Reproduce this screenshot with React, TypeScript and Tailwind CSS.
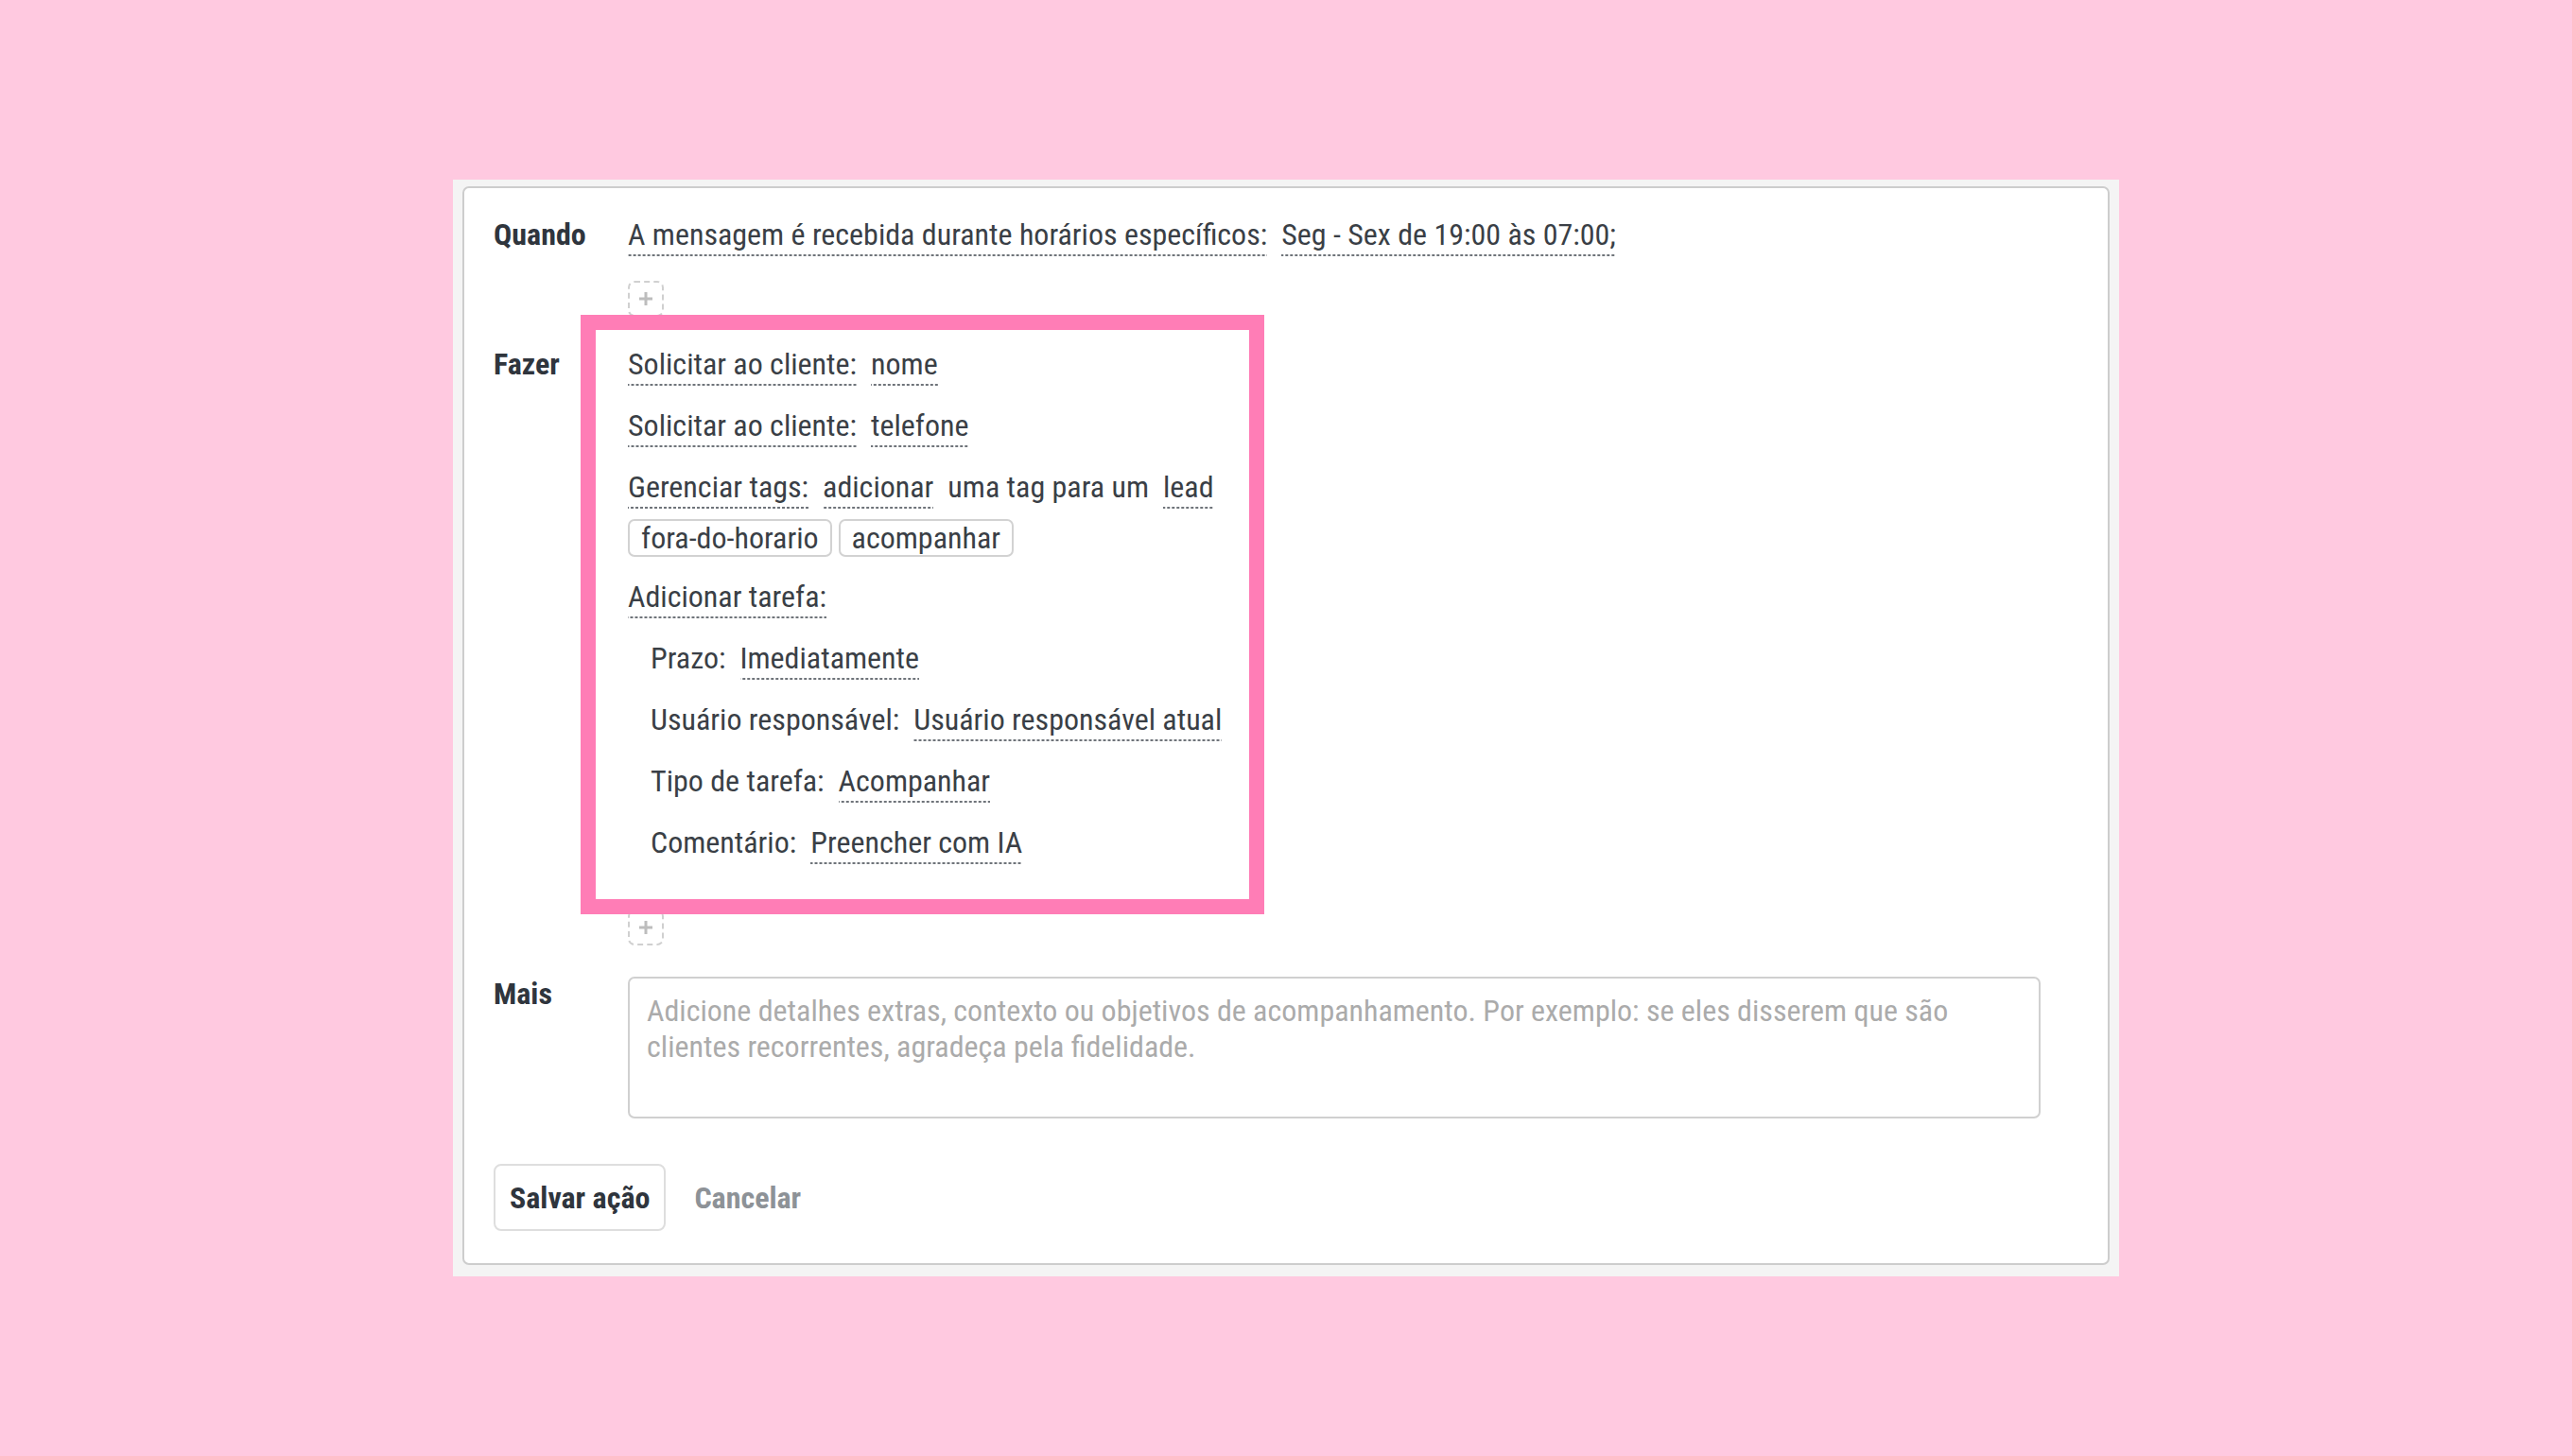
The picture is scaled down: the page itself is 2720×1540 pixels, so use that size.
import type { ReactNode } from "react";

const font = { fontFamily: "'Roboto Condensed', 'Liberation Sans Narrow', sans-serif" };

// sublinhado tracejado dos campos clicáveis
function Dotted({ children }: { children: ReactNode }) {
  return (
    <span className="bg-[linear-gradient(to_right,#6f747a_60%,transparent_0)] bg-[length:5px_2px] bg-bottom bg-repeat-x pb-[6px]">
      {children}
    </span>
  );
}

function Line({ children, indent = false }: { children: ReactNode; indent?: boolean }) {
  return (
    <div className={"flex h-[40px] gap-[15px] whitespace-nowrap leading-[34px] " + (indent ? "pl-[24px]" : "")}>
      {children}
    </div>
  );
}

function AddButton() {
  return (
    <button className="flex h-[38px] w-[38px] items-center justify-center rounded-[7px] border-2 border-dashed border-[#d0d0d0] text-[#bdbdbd]">
      <svg width="16" height="16" viewBox="0 0 16 16" fill="none" stroke="currentColor" strokeWidth="3">
        <path d="M8 1v14M1 8h14" />
      </svg>
    </button>
  );
}

function Tag({ children }: { children: ReactNode }) {
  return (
    <span className="flex h-[40px] items-center rounded-[7px] border-2 border-[#d2d2d2] px-[12px]">{children}</span>
  );
}

export default function App() {
  return (
    <div className="flex h-[1540px] items-center justify-center bg-[#ffc9e0] text-[32px] text-[#3a3f46]" style={font}>
      <div className="bg-[#f4f4f4] px-[10px] pb-[12px] pt-[7px]">
        <div className="w-[1742px] rounded-[7px] border-2 border-[#cdcdcd] bg-white px-[31px] pb-[34px] pt-[32px]">
          {/* Quando */}
          <div className="flex">
            <div className="w-[142px] shrink-0 leading-[34px] font-bold text-[#2f353d]">Quando</div>
            <div>
              <Line>
                <Dotted>A mensagem é recebida durante horários específicos:</Dotted>
                <Dotted>Seg - Sex de 19:00 às 07:00;</Dotted>
              </Line>
              <div className="mt-[26px]">
                <AddButton />
              </div>
            </div>
          </div>

          {/* Fazer */}
          <div className="mt-[33px] flex">
            <div className="w-[142px] shrink-0 leading-[34px] font-bold text-[#2f353d]">Fazer</div>
            <div className="relative">
              <div className="flex flex-col gap-[25px]">
                <Line>
                  <Dotted>Solicitar ao cliente:</Dotted>
                  <Dotted>nome</Dotted>
                </Line>
                <Line>
                  <Dotted>Solicitar ao cliente:</Dotted>
                  <Dotted>telefone</Dotted>
                </Line>
                <div>
                  <Line>
                    <Dotted>Gerenciar tags:</Dotted>
                    <Dotted>adicionar</Dotted>
                    <span>uma tag para um</span>
                    <Dotted>lead</Dotted>
                  </Line>
                  <div className="mt-[11px] flex gap-[7px]">
                    <Tag>fora-do-horario</Tag>
                    <Tag>acompanhar</Tag>
                  </div>
                </div>
                <Line>
                  <Dotted>Adicionar tarefa:</Dotted>
                </Line>
                <Line indent>
                  <span>Prazo:</span>
                  <Dotted>Imediatamente</Dotted>
                </Line>
                <Line indent>
                  <span>Usuário responsável:</span>
                  <Dotted>Usuário responsável atual</Dotted>
                </Line>
                <Line indent>
                  <span>Tipo de tarefa:</span>
                  <Dotted>Acompanhar</Dotted>
                </Line>
                <Line indent>
                  <span>Comentário:</span>
                  <Dotted>Preencher com IA</Dotted>
                </Line>
              </div>
              <div className="mt-[48px]">
                <AddButton />
              </div>
              {/* destaque rosa sobre o bloco de ações */}
              <div className="pointer-events-none absolute -left-[50px] -top-[35px] h-[634px] w-[723px] border-[16px] border-[#ff7db6]" />
            </div>
          </div>

          {/* Mais */}
          <div className="mt-[33px] flex">
            <div className="w-[142px] shrink-0 pt-[1px] leading-[34px] font-bold text-[#2f353d]">Mais</div>
            <textarea
              className="h-[150px] w-[1494px] resize-none rounded-[7px] border-2 border-[#d0d0d0] px-[18px] py-[15px] text-[32px] leading-[38px] text-[#3a3f46] placeholder:text-[#ababab] outline-none"
              style={font}
              placeholder={
                "Adicione detalhes extras, contexto ou objetivos de acompanhamento. Por exemplo: se eles disserem que são\nclientes recorrentes, agradeça pela fidelidade."
              }
            />
          </div>

          {/* botões */}
          <div className="mt-[48px] flex items-center gap-[30px]">
            <button className="h-[71px] rounded-[8px] border-2 border-[#dedede] bg-white px-[15px] font-bold text-[#2f353d]">
              Salvar ação
            </button>
            <button className="font-bold text-[#8d9297]">Cancelar</button>
          </div>
        </div>
      </div>
    </div>
  );
}
